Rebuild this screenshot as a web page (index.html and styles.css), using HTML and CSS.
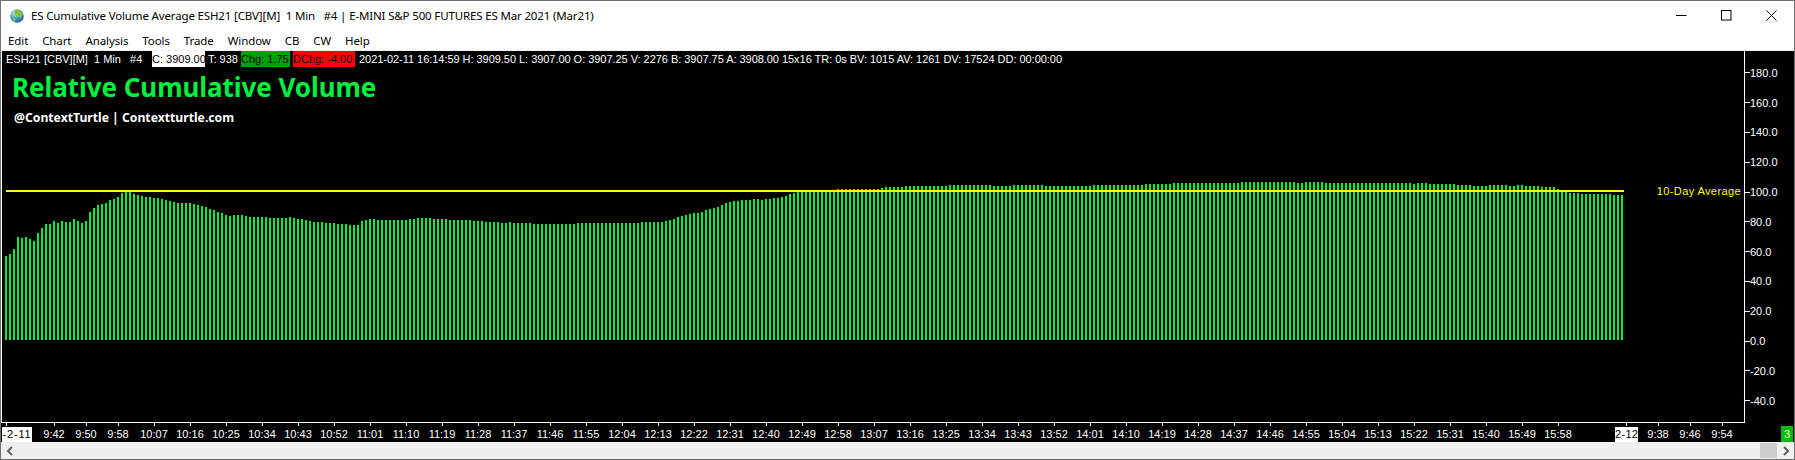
FILE: index.html
```html
<!DOCTYPE html>
<html lang="en">
<head>
    <meta charset="UTF-8">
    <meta name="viewport" content="width=device-width, initial-scale=1.0">
    <title>ES Cumulative Volume Average</title>
    <link rel="stylesheet" href="styles.css">
</head>
<body>

<div class="window">
    <div class="titlebar">
        <svg class="globe" width="14" height="14" viewBox="0 0 14 14">
            <defs>
                <radialGradient id="sea" cx="35%" cy="30%" r="80%">
                    <stop offset="0" stop-color="#d4eef8"/>
                    <stop offset="0.45" stop-color="#4a9fd0"/>
                    <stop offset="1" stop-color="#1a5a96"/>
                </radialGradient>
            </defs>
            <circle cx="7" cy="7" r="6.8" fill="url(#sea)"/>
            <path d="M5 1.2 C8 0 11.5 1.5 12.6 4.5 C13 7 11.5 8.8 9.8 9 C8.6 9 8.8 7.4 7.4 7 C5.6 6.6 4.2 5.6 4.4 3.8 C4.5 2.8 4.4 2 5 1.2Z" fill="#86bd3c"/>
            <path d="M2.4 8.6 C3.6 8.4 5 9.4 5.2 11 C5.2 12 4.8 12.6 4.4 12.8 C3 12 2.2 10.2 2.4 8.6Z" fill="#8cc044"/>
        </svg>
        <span class="window-title">ES Cumulative Volume Average ESH21 [CBV][M]&nbsp; 1 Min &nbsp; #4 | E-MINI S&amp;P 500 FUTURES ES Mar 2021 (Mar21)</span>
        <div class="controls">
            <span class="control">
                <svg width="11" height="11" viewBox="0 0 11 11"><path d="M0 5.5H10.5" stroke="#000" fill="none"/></svg>
            </span>
            <span class="control">
                <svg width="11" height="11" viewBox="0 0 11 11"><rect x="0.5" y="0.5" width="9.5" height="9.5" stroke="#000" fill="none"/></svg>
            </span>
            <span class="control">
                <svg width="11" height="11" viewBox="0 0 11 11"><path d="M0.5 0.5L10.5 10.5M10.5 0.5L0.5 10.5" stroke="#000" fill="none"/></svg>
            </span>
        </div>
    </div>

    <div class="menubar">
        <span>Edit</span>
        <span>Chart</span>
        <span>Analysis</span>
        <span>Tools</span>
        <span>Trade</span>
        <span>Window</span>
        <span>CB</span>
        <span>CW</span>
        <span>Help</span>
    </div>

    <div class="chart">
        <div class="chart-row">
            <div class="plot">
                <svg class="bars" id="bars" width="1742" height="371" viewBox="2 51 1742 371"></svg>
                <div class="status">
                    <span class="st-name">ESH21 [CBV][M]&nbsp; 1 Min &nbsp; #4</span>
                    <span class="st-close">C: 3909.00</span>
                    <span class="st-ticks">T: 938</span>
                    <span class="st-chg">Chg: 1.75</span>
                    <span class="st-dchg">DChg: -4.00</span>
                    <span class="st-rest">2021-02-11 16:14:59 H: 3909.50 L: 3907.00 O: 3907.25 V: 2276 B: 3907.75 A: 3908.00 15x16 TR: 0s BV: 1015 AV: 1261 DV: 17524 DD: 00:00:00</span>
                </div>
                <div class="note-title">Relative Cumulative Volume</div>
                <div class="note-sub">@ContextTurtle | Contextturtle.com</div>
                <div class="avg-label">10-Day Average</div>
            </div>
            <div class="y-axis">
                <div class="y-tick">180.0</div>
                <div class="y-tick">160.0</div>
                <div class="y-tick">140.0</div>
                <div class="y-tick">120.0</div>
                <div class="y-tick">100.0</div>
                <div class="y-tick">80.0</div>
                <div class="y-tick">60.0</div>
                <div class="y-tick">40.0</div>
                <div class="y-tick">20.0</div>
                <div class="y-tick">0.0</div>
                <div class="y-tick">-20.0</div>
                <div class="y-tick">-40.0</div>
            </div>
        </div>

        <div class="x-axis">
            <span class="x-date first">-2-11</span>
            <span class="x-tick short">9:42</span>
            <span class="x-tick short">9:50</span>
            <span class="x-tick short">9:58</span>
            <span class="x-tick gap">10:07</span>
            <span class="x-tick">10:16</span>
            <span class="x-tick">10:25</span>
            <span class="x-tick">10:34</span>
            <span class="x-tick">10:43</span>
            <span class="x-tick">10:52</span>
            <span class="x-tick">11:01</span>
            <span class="x-tick">11:10</span>
            <span class="x-tick">11:19</span>
            <span class="x-tick">11:28</span>
            <span class="x-tick">11:37</span>
            <span class="x-tick">11:46</span>
            <span class="x-tick">11:55</span>
            <span class="x-tick">12:04</span>
            <span class="x-tick">12:13</span>
            <span class="x-tick">12:22</span>
            <span class="x-tick">12:31</span>
            <span class="x-tick">12:40</span>
            <span class="x-tick">12:49</span>
            <span class="x-tick">12:58</span>
            <span class="x-tick">13:07</span>
            <span class="x-tick">13:16</span>
            <span class="x-tick">13:25</span>
            <span class="x-tick">13:34</span>
            <span class="x-tick">13:43</span>
            <span class="x-tick">13:52</span>
            <span class="x-tick">14:01</span>
            <span class="x-tick">14:10</span>
            <span class="x-tick">14:19</span>
            <span class="x-tick">14:28</span>
            <span class="x-tick">14:37</span>
            <span class="x-tick">14:46</span>
            <span class="x-tick">14:55</span>
            <span class="x-tick">15:04</span>
            <span class="x-tick">15:13</span>
            <span class="x-tick">15:22</span>
            <span class="x-tick">15:31</span>
            <span class="x-tick">15:40</span>
            <span class="x-tick">15:49</span>
            <span class="x-tick">15:58</span>
            <span class="x-date second">2-12</span>
            <span class="x-tick short">9:38</span>
            <span class="x-tick short">9:46</span>
            <span class="x-tick short">9:54</span>
            <span class="badge">3</span>
        </div>
    </div>

    <div class="scrollbar">
        <svg width="8" height="10" viewBox="0 0 8 10"><path d="M6 1L2 5L6 9" stroke="#606060" stroke-width="2" fill="none"/></svg>
        <span class="thumb"></span>
        <svg width="8" height="10" viewBox="0 0 8 10"><path d="M2 1L6 5L2 9" stroke="#606060" stroke-width="2" fill="none"/></svg>
    </div>
</div>

<script src="chart.js"></script>
</body>
</html>
```

FILE: styles.css
```css
/* Trading chart window */

body {
    margin: 0;
    font-family: "Noto Sans", sans-serif;
    font-size: 11.5px;
    background-color: #fff;
}
.window {
    box-sizing: border-box;
    width: 1795px;
    height: 460px;
    border: 1px solid #707070;
    display: flex;
    flex-direction: column;
    overflow: hidden;
}

/* title bar */
.titlebar {
    height: 29px;
    flex-shrink: 0;
    display: flex;
    align-items: center;
    padding-left: 9px;
    color: #000;
}
.globe {
    margin-right: 7px;
}
.window-title {
    white-space: nowrap;
    letter-spacing: -0.15px;
}
.controls {
    margin-left: auto;
    display: flex;
}
.control {
    width: 45px;
    height: 29px;
    display: flex;
    align-items: center;
    justify-content: center;
}

/* menu */
.menubar {
    height: 21px;
    flex-shrink: 0;
    box-sizing: border-box;
    border-bottom: 1px solid #f0f0f0;
    display: flex;
    align-items: center;
    gap: 14px;
    padding-left: 7px;
    letter-spacing: -0.1px;
}

/* chart */
.chart {
    flex: 1;
    background-color: #000;
    color: #fff;
    font-family: "Liberation Sans", sans-serif;
    font-size: 11px;
    display: flex;
    flex-direction: column;
    min-height: 0;
}
.chart-row {
    height: 372px;
    flex-shrink: 0;
    box-sizing: border-box;
    display: flex;
}
.plot {
    position: relative;
    width: 1744px;
    box-sizing: border-box;
    border-left: 1px solid #fff;
    border-right: 1px solid #fff;
    border-bottom: 1px solid #fff;
}
.bars {
    position: absolute;
    left: 0;
    top: 0;
}
.status {
    position: relative;
    display: flex;
    height: 16px;
    line-height: 16px;
    padding-left: 4px;
    white-space: nowrap;
}
.status span {
    display: block;
    flex-shrink: 0;
}
.st-name {
    width: 146px;
}
.st-close {
    width: 53px;
    background-color: #fff;
    color: #000;
    margin-right: 3px;
}
.st-ticks {
    width: 33px;
}
.st-chg {
    width: 49px;
    background-color: #00a000;
    color: #000;
    margin-right: 3px;
}
.st-dchg {
    width: 62px;
    background-color: #ff0000;
    color: #000;
    margin-right: 4px;
}
.st-rest {
    letter-spacing: -0.04px;
}
.note-title {
    position: relative;
    margin: 4px 0 0 10px;
    font-family: "Noto Sans", sans-serif;
    font-size: 26px;
    line-height: 32px;
    letter-spacing: -0.05px;
    font-weight: bold;
    color: #00f040;
    white-space: nowrap;
}
.note-sub {
    position: relative;
    margin: 6px 0 0 12px;
    font-family: "Noto Sans", sans-serif;
    font-size: 12.2px;
    line-height: 18px;
    font-weight: bold;
    white-space: nowrap;
}
.avg-label {
    position: absolute;
    right: 3px;
    top: 131px;
    line-height: 18px;
    letter-spacing: 0.4px;
    color: #ffff00;
}

/* price axis */
.y-axis {
    flex: 1;
    padding-top: 7px;
}
.y-tick {
    height: 29.8px;
    display: flex;
    align-items: center;
}
.y-tick::before {
    content: "";
    width: 5px;
    height: 1px;
    background-color: #fff;
}

/* time axis */
.x-axis {
    flex: 1;
    display: flex;
    align-items: flex-start;
    white-space: nowrap;
}
.x-tick {
    position: relative;
    width: 36px;
    padding-top: 4px;
    line-height: 15px;
    text-align: center;
}
.x-tick::before, .x-date::before {
    content: "";
    position: absolute;
    top: 0;
    left: 50%;
    width: 1px;
    height: 3px;
    background-color: #fff;
}
.x-tick.short {
    width: 32px;
}
.x-tick.gap {
    margin-left: 2px;
}
.x-date {
    position: relative;
    margin-top: 4px;
    background-color: #fff;
    color: #000;
    line-height: 15px;
    text-align: center;
}
.x-date::before {
    top: -4px;
}
.x-date.first {
    width: 30px;
    margin-left: 1px;
    margin-right: 6px;
    letter-spacing: 0.8px;
}
.x-date.first::before {
    left: 4px;
}
.x-date.second {
    width: 23px;
    margin-left: 39px;
    margin-right: 4px;
    letter-spacing: 0.3px;
}
.x-date.second::before {
    left: 11px;
}
.badge {
    margin: 3px 1px 0 auto;
    width: 12px;
    height: 16px;
    line-height: 16px;
    text-align: center;
    background-color: #00c000;
    color: #fff;
}

/* bottom scrollbar */
.scrollbar {
    height: 17px;
    flex-shrink: 0;
    background-color: #f0f0f0;
    display: flex;
    align-items: center;
    padding: 0 4px 0 5px;
}
.thumb {
    margin-left: auto;
    margin-right: 5px;
    width: 17px;
    height: 15px;
    background-color: #cdcdcd;
}
```

FILE: chart.js
```js
// Bar tops as [y, how many bars], in page pixels. One bar every 4px.
var runs = [
    [256,1],[254,1],[249,1],[237,1],[238,1],[237,1],[239,1],[241,1],[233,1],[228,1],
    [224,2],[221,1],[223,1],[221,1],[222,2],[219,1],[221,1],[223,1],[221,1],[212,1],
    [208,1],[205,1],[204,1],[203,1],[200,1],[199,1],[197,1],[193,1],[192,2],[194,1],
    [195,1],[196,1],[197,2],[198,2],[199,1],[200,1],[201,1],[202,1],[203,4],[204,1],
    [205,1],[206,1],[207,1],[209,1],[210,1],[212,1],[213,1],[215,1],[216,1],[215,3],
    [216,1],[217,5],[218,5],[217,1],[218,1],
    // 11:00 - 13:00
    [219,2],[220,1],[221,1],[222,3],[223,3],[224,3],[225,3],[221,1],[220,1],[219,2],
    [220,8],[219,2],[218,4],[219,4],[220,6],[221,3],[222,4],[223,2],[222,1],[223,5],
    [224,11],[223,16],[222,6],[221,1],[220,1],[219,1],[217,1],[216,1],[215,1],[214,1],
    [213,2],[212,1],[210,1],[209,1],[208,1],[207,1],[205,1],[203,1],[202,1],[201,2],
    [200,3],[199,2],[200,1],[199,2],[198,1],
    // 13:00 - 14:30
    [198,1],[197,1],[196,1],[194,1],[193,1],[191,10],[189,11],[188,1],[187,5],[186,11],
    [185,11],[186,5],[185,8],[186,12],[185,13],[184,7],[183,7],
    // 14:30 to the close
    [183,10],[182,14],[183,2],[182,5],[183,22],[184,1],[183,3],[184,7],[185,4],[186,4],
    [185,5],[186,2],[185,2],[186,4],[187,4],[189,1],[192,2],[193,3],[194,8],[195,3]
];

var baseline = 340;
var d = '';
var x = 5;
for (var i = 0; i < runs.length; i++) {
    for (var n = 0; n < runs[i][1]; n++) {
        d += 'M' + x + ' ' + runs[i][0] + 'h2V' + baseline + 'h-2z';
        x += 4;
    }
}

var svg = document.getElementById('bars');
svg.innerHTML =
    '<path d="' + d + '" fill="#00f040"/>' +
    '<rect x="6" y="190" width="1618" height="2" fill="#ffff00"/>';
```
